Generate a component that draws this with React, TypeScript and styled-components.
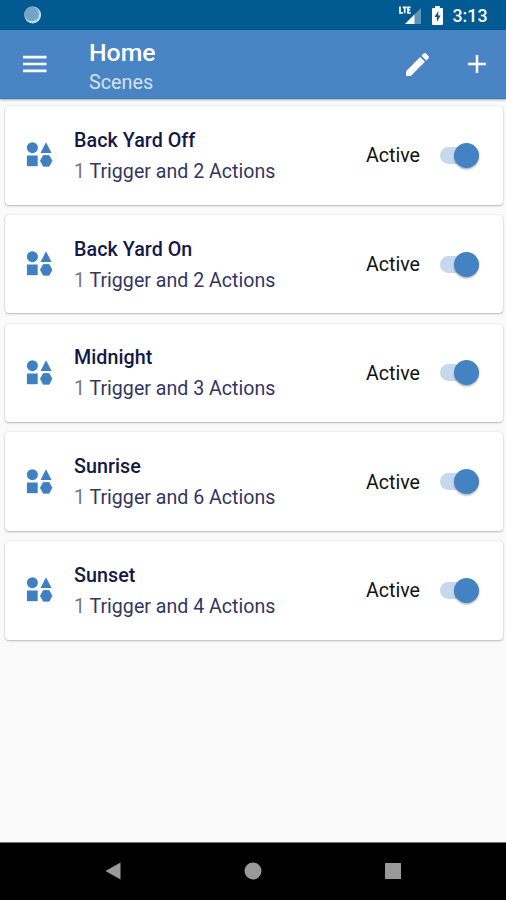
import React from 'react';
import styled, { createGlobalStyle } from 'styled-components';

const Global = createGlobalStyle`
  * { box-sizing: border-box; }
  body { margin: 0; background: #fafafa; }
`;

const Screen = styled.div`
  width: 506px;
  height: 900px;
  display: flex;
  flex-direction: column;
  overflow: hidden;
  background: #fafafa;
  font-family: Roboto, sans-serif;
  white-space: nowrap;
`;

const StatusBar = styled.div`
  flex: none;
  height: 30px;
  padding: 0 18.5px 0 23px;
  display: flex;
  align-items: center;
  background: #015a92;
  color: #fff;
`;

const StatusIcons = styled.div`
  margin-left: auto;
  display: flex;
  align-items: center;
  gap: 10px;
`;

const Clock = styled.div`
  font-size: 17.8px;
  font-weight: 500;
  line-height: 30px;
  padding-top: 2px;
  margin-left: -1px;
`;

const AppBar = styled.header`
  flex: none;
  height: 69px;
  padding: 0 20px 0 23px;
  display: flex;
  align-items: center;
  background: #4984c4;
  color: #fff;
  border-bottom: 1px solid #3c7aae;
  box-shadow: 0 1px 2px rgba(20, 60, 90, 0.4);
  z-index: 1;
`;

const Titles = styled.div`
  flex: 1;
  margin-left: 42px;
`;

const Title = styled.div`
  font-size: 24.8px;
  font-weight: 500;
  line-height: 30px;
  margin-top: 4px;
`;

const Subtitle = styled.div`
  font-size: 19.8px;
  line-height: 24px;
  margin-top: 3px;
  color: #d3e2f3;
`;

const Tools = styled.div`
  display: flex;
  align-items: center;
  gap: 39px;
`;

const List = styled.main`
  flex: 1;
  padding: 7px 3.5px 0 5px;
  display: flex;
  flex-direction: column;
  gap: 10.3px;
`;

const Card = styled.section`
  height: 98.5px;
  padding: 0 24px 0 21px;
  display: flex;
  align-items: center;
  background: #fff;
  border-radius: 4px;
  box-shadow: 0 1px 2px rgba(0, 0, 0, 0.24), 0 0 2px rgba(0, 0, 0, 0.12);
`;

const CardText = styled.div`
  flex: 1;
  margin-left: 21px;
  padding-top: 2px;
`;

const Name = styled.div`
  font-size: 19.7px;
  font-weight: 500;
  letter-spacing: 0.05px;
  line-height: 31px;
  color: #151846;
`;

const Detail = styled.div`
  font-size: 19.6px;
  line-height: 32px;
  color: #34365f;
`;

const Count = styled.span`
  color: #77777f;
`;

const State = styled.div`
  font-size: 19.6px;
  padding-top: 1px;
  color: #111;
  margin-right: 20px;
`;

const Track = styled.div`
  width: 38.5px;
  height: 17px;
  border-radius: 9px;
  background: #c5d8ec;
  display: flex;
  align-items: center;
  justify-content: flex-end;
`;

const Thumb = styled.div`
  width: 25px;
  height: 25px;
  border-radius: 50%;
  background: #4382c3;
  box-shadow: 0 1.5px 2px rgba(0, 0, 0, 0.3);
`;

const NavBar = styled.nav`
  flex: none;
  height: 58.5px;
  border-top: 1px solid #777;
  background: #000;
  padding: 0 105px;
  display: flex;
  align-items: center;
  justify-content: space-between;
`;

const SceneIcon = () => (
  <svg width="27" height="26" viewBox="0 0 27 26" fill="#3f80c2">
    <circle cx="6.4" cy="5.7" r="5.5" />
    <path d="M20 .3 25.6 10.9H14.5Z" />
    <path d="M.9 13.5h10.8v10.7H.9Z" />
    <path d="M17.3 13.5h5.8l2.9 5.35-2.9 5.35h-5.8l-2.9-5.35Z" stroke="#3f80c2" strokeWidth=".8" strokeLinejoin="round" />
  </svg>
);

const scenes = [
  { name: 'Back Yard Off', actions: 2 },
  { name: 'Back Yard On', actions: 2 },
  { name: 'Midnight', actions: 3 },
  { name: 'Sunrise', actions: 6 },
  { name: 'Sunset', actions: 4 },
];

export default function App() {
  return (
    <>
      <Global />
      <Screen>
        <StatusBar>
          <svg width="19" height="18" viewBox="0 0 19 18">
            <circle cx="9.7" cy="9" r="8.4" fill="#c5dce9" />
            <circle cx="8.8" cy="8" r="7.3" fill="#73a6c6" />
          </svg>
          <StatusIcons>
            <svg width="23" height="20" viewBox="0 0 23 20">
              <path d="M22 3v16H6Z" fill="#5c96ba" />
              <path d="M15.5 9.5V19H6Z" fill="#fff" />
              <path d="M1 1.5v6.5h3M3.7 2.3h4M5.7 2.3v6M11.6 2.3H9v5.6h2.6M9 5h2.3" fill="none" stroke="#fff" strokeWidth="1.7" />
            </svg>
            <svg width="11" height="19" viewBox="0 0 11 19">
              <path d="M3.2 0h4.6v2H10a1 1 0 0 1 1 1v15a1 1 0 0 1-1 1H1a1 1 0 0 1-1-1V3a1 1 0 0 1 1-1h2.2Z" fill="#fff" />
              <path d="M6.3 5 2.5 11h2.4v5L8.6 9.6H6.3Z" fill="#015a92" />
            </svg>
            <Clock>3:13</Clock>
          </StatusIcons>
        </StatusBar>
        <AppBar>
          <svg width="24" height="18" viewBox="0 0 24 18">
            <path d="M0 2.2h23.5M0 9h23.5M0 15.8h23.5" stroke="#fff" strokeWidth="2.7" />
          </svg>
          <Titles>
            <Title>Home</Title>
            <Subtitle>Scenes</Subtitle>
          </Titles>
          <Tools>
            <svg width="23" height="23" viewBox="3 3 18 18" fill="#fff">
              <path d="M3 17.25V21h3.75L17.81 9.94l-3.75-3.75L3 17.25zM20.71 7.04a1 1 0 0 0 0-1.41l-2.34-2.34a1 1 0 0 0-1.41 0l-1.83 1.83 3.75 3.75 1.83-1.83z" />
            </svg>
            <svg width="18" height="18" viewBox="0 0 18 18">
              <path d="M0 9h18M9 0v18" stroke="#fff" strokeWidth="2.5" />
            </svg>
          </Tools>
        </AppBar>
        <List>
          {scenes.map((s) => (
            <Card key={s.name}>
              <SceneIcon />
              <CardText>
                <Name>{s.name}</Name>
                <Detail>
                  <Count>1</Count> Trigger and {s.actions} Actions
                </Detail>
              </CardText>
              <State>Active</State>
              <Track>
                <Thumb />
              </Track>
            </Card>
          ))}
        </List>
        <NavBar>
          <svg width="16" height="18" viewBox="0 0 16 18">
            <path d="M15.5 .5v17L.5 9Z" fill="#999" />
          </svg>
          <svg width="18" height="18" viewBox="0 0 18 18">
            <circle cx="9" cy="9" r="8.5" fill="#999" />
          </svg>
          <svg width="16" height="16" viewBox="0 0 16 16">
            <rect width="16" height="16" rx=".6" fill="#999" />
          </svg>
        </NavBar>
      </Screen>
    </>
  );
}
